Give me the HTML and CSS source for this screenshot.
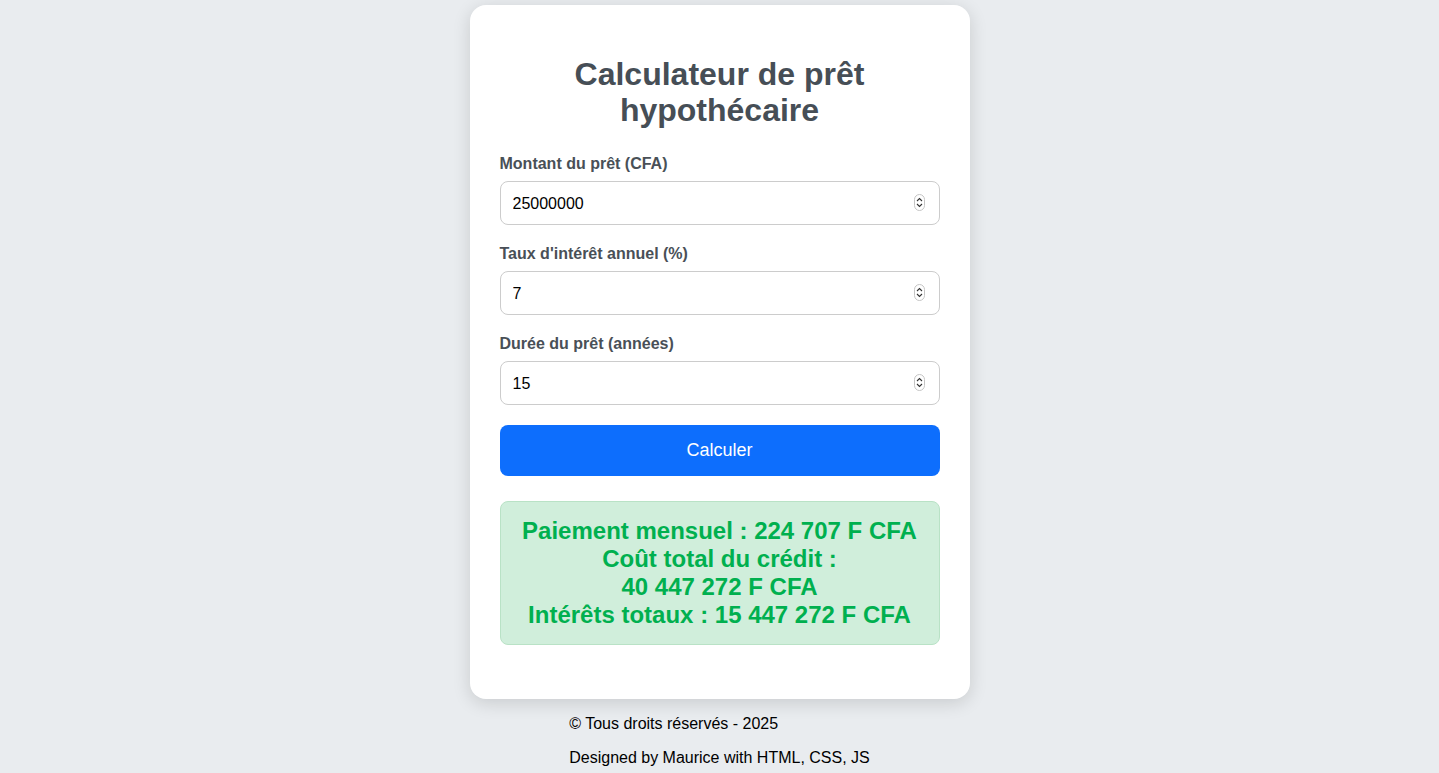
FILE: index.html
```html
<!DOCTYPE html>
<html lang="fr">
<head>
<meta charset="utf-8">
<title>Calculateur de prêt hypothécaire</title>
<link rel="stylesheet" href="styles.css">
</head>
<body>
<main class="card">
  <h1 class="title">Calculateur de prêt hypothécaire</h1>
  <form class="form">
    <div class="field">
      <label class="label" for="amount">Montant du prêt (CFA)</label>
      <div class="input-wrap">
        <input class="input" id="amount" type="number" value="25000000">
        <svg class="spin" width="11" height="17" viewBox="0 0 11 17"><rect x="0.5" y="0.5" width="10" height="16" rx="5" fill="#fff" stroke="#c4c4c4"/><path d="M3 7 L5.5 4.5 L8 7" fill="none" stroke="#333" stroke-width="1.1"/><path d="M3 10 L5.5 12.5 L8 10" fill="none" stroke="#333" stroke-width="1.1"/></svg>
      </div>
    </div>
    <div class="field">
      <label class="label" for="rate">Taux d'intérêt annuel (%)</label>
      <div class="input-wrap">
        <input class="input" id="rate" type="number" value="7">
        <svg class="spin" width="11" height="17" viewBox="0 0 11 17"><rect x="0.5" y="0.5" width="10" height="16" rx="5" fill="#fff" stroke="#c4c4c4"/><path d="M3 7 L5.5 4.5 L8 7" fill="none" stroke="#333" stroke-width="1.1"/><path d="M3 10 L5.5 12.5 L8 10" fill="none" stroke="#333" stroke-width="1.1"/></svg>
      </div>
    </div>
    <div class="field">
      <label class="label" for="years">Durée du prêt (années)</label>
      <div class="input-wrap">
        <input class="input" id="years" type="number" value="15">
        <svg class="spin" width="11" height="17" viewBox="0 0 11 17"><rect x="0.5" y="0.5" width="10" height="16" rx="5" fill="#fff" stroke="#c4c4c4"/><path d="M3 7 L5.5 4.5 L8 7" fill="none" stroke="#333" stroke-width="1.1"/><path d="M3 10 L5.5 12.5 L8 10" fill="none" stroke="#333" stroke-width="1.1"/></svg>
      </div>
    </div>
    <button class="btn" type="button">Calculer</button>
  </form>
  <div class="result">
    <div>Paiement mensuel : 224 707 F CFA</div>
    <div>Coût total du crédit :<br>40 447 272 F CFA</div>
    <div>Intérêts totaux : 15 447 272 F CFA</div>
  </div>
</main>
<footer class="footer">
  <p class="footer-line">© Tous droits réservés - 2025</p>
  <p class="footer-line">Designed by Maurice with HTML, CSS, JS</p>
</footer>
</body>
</html>
```

FILE: styles.css
```css
* { box-sizing: border-box; }

html, body {
  margin: 0;
  padding: 0;
}

body {
  background: #e9ecef;
  font-family: "Liberation Sans", Arial, Helvetica, sans-serif;
  display: flex;
  flex-direction: column;
  align-items: center;
  min-height: 773px;
}

.card {
  width: 500px;
  margin-top: 5px;
  background: #fff;
  border-radius: 16px;
  box-shadow: 0 4px 18px rgba(0, 0, 0, 0.14);
  padding: 51px 30px 54px;
}

.title {
  margin: 0 0 27px;
  text-align: center;
  font-size: 32px;
  line-height: 36px;
  font-weight: 700;
  color: #464e56;
}

.form {
  display: flex;
  flex-direction: column;
}

.field {
  display: flex;
  flex-direction: column;
  margin-bottom: 20px;
}

.label {
  font-size: 16px;
  line-height: 18px;
  font-weight: 700;
  color: #495057;
  margin-bottom: 8px;
}

.input-wrap {
  position: relative;
}

.input {
  width: 100%;
  height: 44px;
  border: 1px solid #ccc;
  border-radius: 8px;
  padding: 1px 12px 0;
  font-family: "Liberation Sans", Arial, Helvetica, sans-serif;
  font-size: 16px;
  color: #000;
  background: #fff;
  outline: none;
  -moz-appearance: textfield;
}

.input::-webkit-outer-spin-button,
.input::-webkit-inner-spin-button {
  -webkit-appearance: none;
  margin: 0;
}

.spin {
  position: absolute;
  right: 15px;
  top: 13px;
}

.btn {
  height: 51px;
  width: 100%;
  border: none;
  border-radius: 8px;
  background: #0d6efd;
  color: #fff;
  font-family: "Liberation Sans", Arial, Helvetica, sans-serif;
  font-size: 18px;
  padding-top: 1px;
}

.result {
  margin-top: 25px;
  background: #d0eedb;
  border: 1px solid #b9e2c6;
  border-radius: 8px;
  padding: 15px 10px;
  text-align: center;
  color: #00b04f;
  font-weight: 700;
  font-size: 24px;
  line-height: 28px;
}

.footer {
  width: max-content;
}

.footer-line {
  margin: 16px 0;
  font-size: 16px;
  line-height: 18px;
  color: #000;
}
```
